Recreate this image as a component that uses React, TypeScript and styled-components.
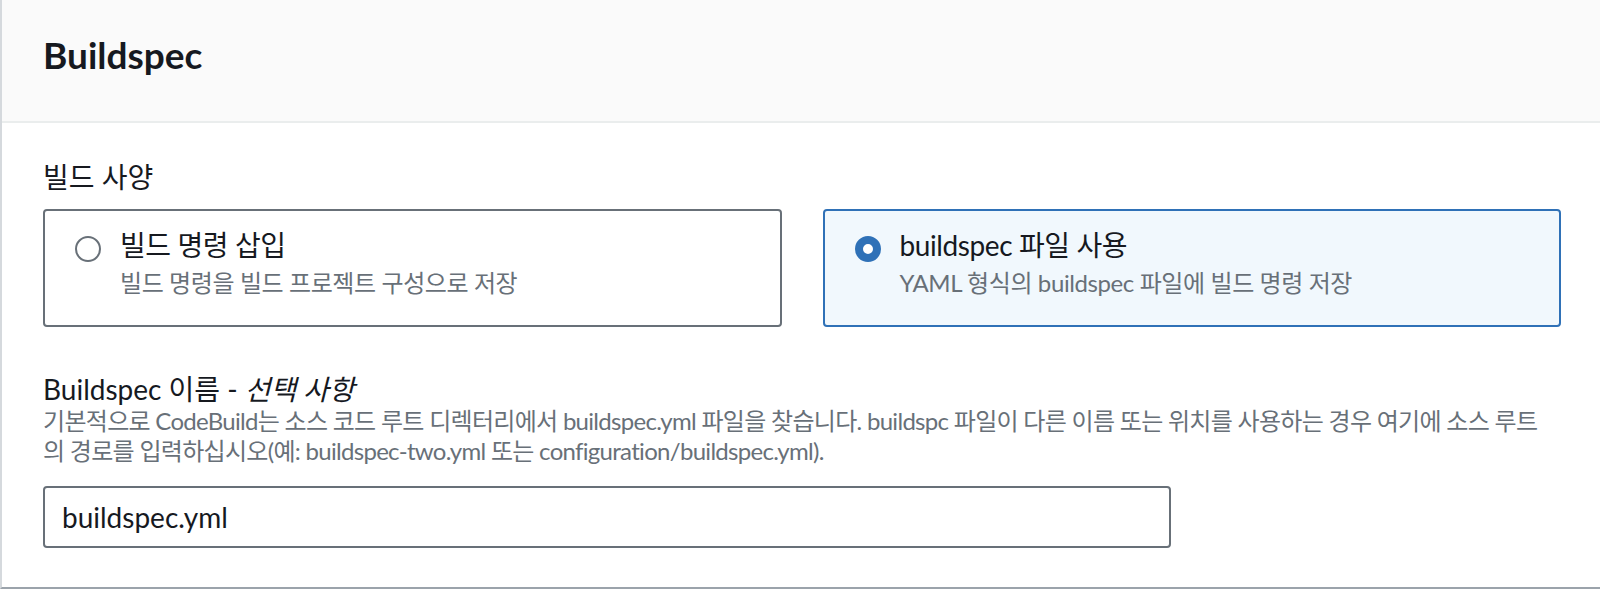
import styled, { createGlobalStyle } from 'styled-components';

const GlobalStyle = createGlobalStyle`
  body {
    margin: 0;
    background: #ffffff;
    font-family: Lato, "Noto Sans CJK KR", sans-serif;
    font-feature-settings: "palt";
    color: #16191f;
  }
`;

const Panel = styled.section`
  border-left: 2px solid #d5d9dd;
  border-bottom: 2px solid #9ba3ab;
  background: #ffffff;
`;

const PanelHeader = styled.header`
  background: #fafafa;
  border-bottom: 2px solid #eaeded;
  padding: 33px 39px 44px 41px;
`;

const Title = styled.h2`
  margin: 0;
  font-size: 37px;
  line-height: 44px;
  font-weight: 700;
  color: #16191f;
`;

const PanelBody = styled.div`
  padding: 34px 39px 39px 41px;
`;

const FieldLabel = styled.div<{ $tight?: boolean }>`
  font-size: 28px;
  line-height: ${(p) => (p.$tight ? '34px' : '40px')};
  color: #16191f;

  em {
    font-style: italic;
  }
`;

const TileGrid = styled.div`
  display: grid;
  grid-template-columns: 1fr 1fr;
  gap: 41px;
  margin-top: 12px;
`;

const Tile = styled.label<{ $selected?: boolean }>`
  display: flex;
  align-items: flex-start;
  gap: 19px;
  padding: 12px 30px 26px 30px;
  border: 2px solid ${(p) => (p.$selected ? '#2f71b7' : '#687078')};
  border-radius: 4px;
  background: ${(p) => (p.$selected ? '#f1f8fd' : '#ffffff')};
  cursor: pointer;
`;

const RadioMark = styled.span<{ $checked?: boolean }>`
  flex: none;
  display: block;
  box-sizing: border-box;
  width: 26px;
  height: 26px;
  margin-top: 13px;
  border-radius: 50%;
  background: #ffffff;
  border: ${(p) => (p.$checked ? '8px solid #2f71b7' : '2px solid #687078')};
`;

const TileText = styled.div`
  display: flex;
  flex-direction: column;
  letter-spacing: -0.4px;
`;

const TileTitle = styled.span`
  font-size: 28px;
  line-height: 44px;
  color: #16191f;
`;

const TileDesc = styled.span`
  font-size: 24px;
  line-height: 32px;
  color: #687078;
`;

const Field = styled.div`
  margin-top: 45px;
`;

const Hint = styled.p`
  margin: 0;
  font-size: 24px;
  line-height: 30px;
  letter-spacing: -0.7px;
  white-space: nowrap;
  color: #687078;
`;

const TextInput = styled.input`
  display: block;
  box-sizing: border-box;
  width: 1128px;
  height: 62px;
  margin-top: 20px;
  padding: 0 17px;
  border: 2px solid #687078;
  border-radius: 4px;
  font-family: Lato, "Noto Sans CJK KR", sans-serif;
  font-size: 28px;
  color: #16191f;
  background: #ffffff;
  outline: none;
`;

const tiles = [
  { id: 'insert', title: '빌드 명령 삽입', desc: '빌드 명령을 빌드 프로젝트 구성으로 저장' },
  { id: 'file', title: 'buildspec 파일 사용', desc: 'YAML 형식의 buildspec 파일에 빌드 명령 저장' },
];

export default function App() {
  const selected = 'file';

  return (
    <>
      <GlobalStyle />
      <Panel>
        <PanelHeader>
          <Title>Buildspec</Title>
        </PanelHeader>
        <PanelBody>
          <FieldLabel>빌드 사양</FieldLabel>
          <TileGrid>
            {tiles.map((t) => (
              <Tile key={t.id} $selected={t.id === selected}>
                <RadioMark $checked={t.id === selected} />
                <TileText>
                  <TileTitle>{t.title}</TileTitle>
                  <TileDesc>{t.desc}</TileDesc>
                </TileText>
              </Tile>
            ))}
          </TileGrid>
          <Field>
            <FieldLabel $tight>
              Buildspec 이름 - <em>선택 사항</em>
            </FieldLabel>
            <Hint>
              기본적으로 CodeBuild는 소스 코드 루트 디렉터리에서 buildspec.yml 파일을 찾습니다. buildspc 파일이 다른 이름 또는 위치를 사용하는 경우 여기에 소스 루트
              <br />
              의 경로를 입력하십시오(예: buildspec-two.yml 또는 configuration/buildspec.yml).
            </Hint>
            <TextInput defaultValue="buildspec.yml" />
          </Field>
        </PanelBody>
      </Panel>
    </>
  );
}
